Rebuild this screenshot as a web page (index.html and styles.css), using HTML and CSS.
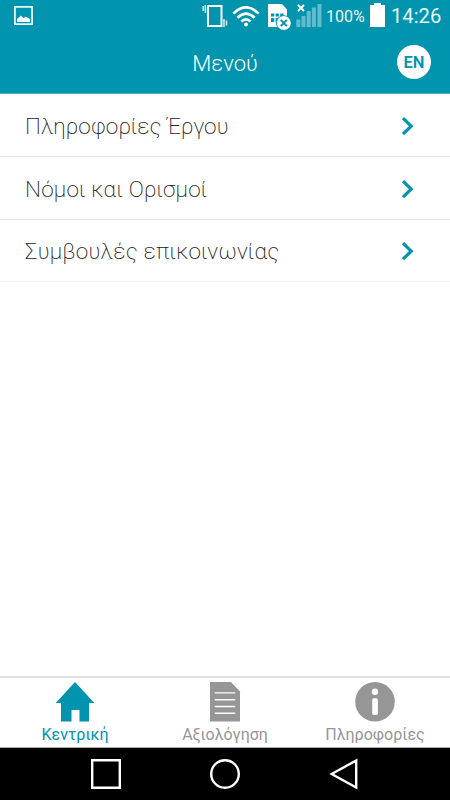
FILE: index.html
```html
<!DOCTYPE html>
<html lang="el">
<head>
<meta charset="utf-8">
<title>Μενού</title>
<link rel="stylesheet" href="styles.css">
</head>
<body>
<div class="screen">
  <div class="status">
    <svg class="picture" width="19" height="19" viewBox="0 0 19 19"><path fill="none" stroke="#e8f7fa" stroke-width="1.8" d="M.9.9h17.2v17.2H.9z"/><path fill="#fff" d="M3 16v-3l2-1.500 1.500-2 3 2.500 2.500-1.300L16 13v3z"/></svg>
    <svg class="vibrate" width="26" height="24" viewBox="0 0 26 24"><path fill="none" stroke="#fff" stroke-width="2" d="M6 2h13.500v20H6z"/><path fill="none" stroke="#d5eff4" stroke-width="1.5" d="M1.200 2v5M3.400 1v8M22 15v8M24.500 16.500v5"/></svg>
    <svg class="wifi" width="28" height="21" viewBox="0 0 28 21"><g fill="none" stroke="#fff" stroke-width="2.7"><path d="M1.400 7.600q12.600-12.500 25.200 0"/><path d="M5.400 11.700q8.600-8.200 17.200 0"/><path d="M9.400 15.600q4.600-4.300 9.200 0"/></g><circle cx="14" cy="18.500" r="1.900" fill="#fff"/></svg>
    <svg class="sim" width="24" height="28" viewBox="0 0 24 28"><path fill="#fff" d="M1 1h14l5 5.500V24H1z"/><g fill="#0094ae"><path d="M4 10.500h3.300v3H4zM8.600 10.500h3.300v3H8.600zM13.200 10.500h3.300v3h-3.300zM4 15h3.300v4H4zM8.600 15h3.300v4H8.600z"/><circle cx="16.800" cy="20" r="7.800"/></g><circle cx="16.800" cy="20" r="7" fill="#fff"/><path stroke="#0094ae" stroke-width="2" d="m13.700 16.900 6.200 6.200m0-6.200-6.200 6.200"/></svg>
    <svg class="signal" width="26" height="25" viewBox="0 0 26 25"><path fill="#63bccc" d="M.3 15.500h4V23H.3zM5.500 12h4v11h-4zM10.700 7h4v16h-4zM15.900 3.500h4V23h-4zM21.500 0h4v23h-4z"/><path stroke="#fff" stroke-width="2" d="m2 1 6 6m0-6L2 7"/></svg>
    <span class="percent">100%</span>
    <svg class="battery" width="15" height="24" viewBox="0 0 15 24"><path fill="#fff" d="M4 0h7v2h4v22H0V2h4z"/></svg>
    <span class="clock">14:26</span>
  </div>
  <header class="header">
    <h1 class="title">Μενού</h1>
    <span class="lang">EN</span>
  </header>
  <main class="menu">
    <div class="row compact"><span>Πληροφορίες Έργου</span><svg width="13" height="20" viewBox="0 0 13 20"><path d="m2 2.200 8.200 8L2 18.200"/></svg></div>
    <div class="row"><span>Νόμοι και Ορισμοί</span><svg width="13" height="20" viewBox="0 0 13 20"><path d="m2 2.200 8.200 8L2 18.200"/></svg></div>
    <div class="row last"><span>Συμβουλές επικοινωνίας</span><svg width="13" height="20" viewBox="0 0 13 20"><path d="m2 2.200 8.200 8L2 18.200"/></svg></div>
  </main>
  <nav class="tabs">
    <div class="tab active"><svg width="40" height="40" viewBox="0 0 40 40"><path fill="currentColor" d="M20 0 39.300 21H34v18.500h-9.500V28h-8v11.500H6V21H.7z"/></svg><span>Κεντρική</span></div>
    <div class="tab"><svg width="40" height="40" viewBox="0 0 40 40"><path fill="currentColor" d="M5 0h21l9 9.500v30H5z"/><path stroke="#fff" stroke-width="1.400" d="M9.800 10.900h20.400M9.800 17.700h20.400M9.800 24.500h20.400M9.800 31.300h20.400"/></svg><span>Αξιολόγηση</span></div>
    <div class="tab"><svg width="40" height="40" viewBox="0 0 40 40"><circle cx="20" cy="19.800" r="19.800" fill="currentColor"/><circle cx="20" cy="9.800" r="3.200" fill="#fff"/><rect x="17.200" y="16.300" width="5.700" height="16.600" rx="1.600" fill="#fff"/></svg><span>Πληροφορίες</span></div>
  </nav>
  <div class="system">
    <svg width="32" height="32" viewBox="0 0 32 32"><path d="M2.200 2.200h27.600v27.600H2.200z"/></svg>
    <svg width="32" height="32" viewBox="0 0 32 32"><circle cx="16" cy="16" r="13.800"/></svg>
    <svg width="32" height="32" viewBox="0 0 32 32"><path d="M28.200 2.500v27L3.700 16z"/></svg>
  </div>
</div>
</body>
</html>
```
FILE: styles.css
```css
* { box-sizing: border-box; }
body { margin: 0; font-family: Roboto, "Liberation Sans", sans-serif; background: #fff; }
svg { display: block; flex: none; }
.screen { width: 450px; height: 800px; display: flex; flex-direction: column; overflow: hidden; }

.status { height: 33px; flex: none; display: flex; align-items: flex-start; padding-left: 14px; background: #0094ae; color: #e9f7fa; white-space: nowrap; }
.picture { margin-top: 6px; }
.vibrate { margin: 4px 0 0 169px; }
.wifi { margin: 6px 0 0 4px; }
.sim { margin: 3px 0 0 7px; }
.signal { margin: 4px 0 0 5px; }
.percent { width: 44px; padding-left: 4px; margin-top: 6px; font-size: 16px; line-height: 21px; }
.battery { margin: 3px 0 0 4px; }
.clock { margin: 4px 0 0 6px; font-size: 20.2px; line-height: 24px; }

.header { height: 61px; flex: none; display: grid; grid-template-columns: 1fr auto 1fr; align-items: center; padding: 0 19px; background: #0094ae; border-bottom: 1px solid #42afc2; }
.title { grid-column: 2; margin: 0; padding-top: 2px; color: #fff; font-size: 22px; font-weight: 300; line-height: 28px; }
.lang { justify-self: end; width: 34px; height: 34px; margin-bottom: 2px; border-radius: 50%; background: #fff; color: #0094ae; font-size: 16.5px; font-weight: 600; line-height: 36px; text-align: center; }

.menu { flex: 1; }
.row { height: 63px; display: flex; align-items: center; justify-content: space-between; padding: 1px 36px 0 25px; border-bottom: 1px solid #e6e6e6; color: #222; font-size: 22.5px; font-weight: 200; letter-spacing: .2px; white-space: nowrap; }
.row.compact { letter-spacing: .04px; }
.row.last { height: 62px; border-bottom-color: #f0f0f0; }
.row path { fill: none; stroke: #0094ae; stroke-width: 3.2; }

.tabs { height: 72px; flex: none; display: grid; grid-template-columns: repeat(3, 1fr); border-top: 2px solid #e2e2e2; border-bottom: 1px solid #aaa; }
.tab { display: flex; flex-direction: column; align-items: center; padding-top: 4px; color: #969696; font-size: 16px; line-height: 26px; white-space: nowrap; }
.active { color: #0094ae; }

.system { height: 52px; flex: none; display: flex; justify-content: center; align-items: center; gap: 87px; background: #000; }
.system svg { fill: none; stroke: #fff; stroke-width: 2.4; }
```
